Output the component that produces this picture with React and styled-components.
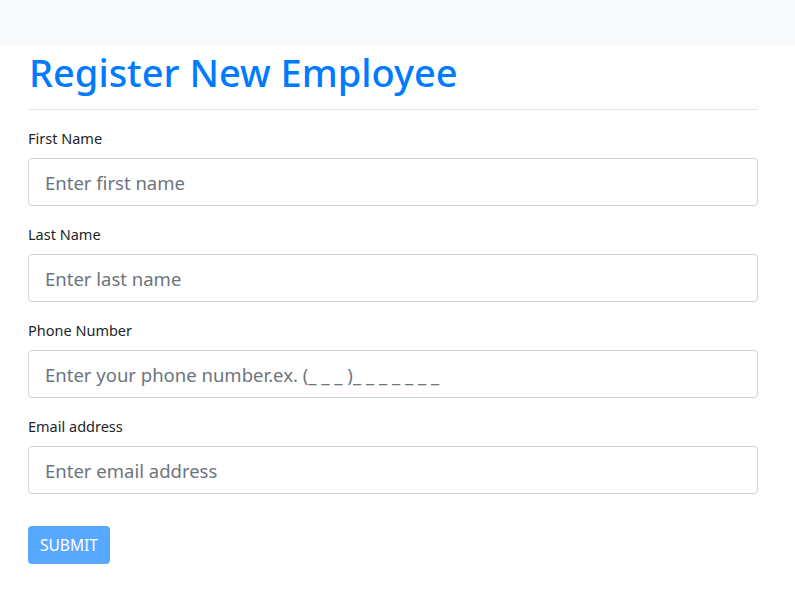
import React from 'react';
import styled, { createGlobalStyle } from 'styled-components';

const GlobalStyle = createGlobalStyle`
  body {
    margin: 0;
    background: #fff;
    font-family: "Noto Sans", "Open Sans", sans-serif;
    color: #212529;
  }
`;

const TopBar = styled.div`
  height: 45px;
  background: #f8f9fa;
`;

const Container = styled.div`
  padding: 0 37px 0 28px;
`;

const Title = styled.h1`
  margin: 3px 0 0 1px;
  font-size: 38px;
  line-height: 48px;
  font-weight: 500;
  color: #007bff;
`;

const LineSeparator = styled.hr`
  margin: 13px 0 20px;
  border: 0;
  border-top: 1px solid #e3e5e8;
`;

const FormGroup = styled.div`
  margin-bottom: 20px;
`;

const Label = styled.label`
  display: block;
  font-size: 14.5px;
  line-height: 16px;
  margin-bottom: 12px;
`;

const Input = styled.input`
  display: block;
  box-sizing: border-box;
  width: 100%;
  height: 48px;
  padding: 0 16px;
  font-family: inherit;
  font-size: 18.5px;
  color: #495057;
  border: 1px solid #ced4da;
  border-radius: 4px;
  outline: none;

  &::placeholder {
    color: #6c757d;
  }
`;

const Button = styled.button`
  margin-top: 12px;
  height: 38px;
  padding: 0 12px;
  font-family: inherit;
  font-size: 15.5px;
  color: #fff;
  background: #59a8ff;
  border: 0;
  border-radius: 4px;
`;

const fields = [
  { id: 'firstName', label: 'First Name', placeholder: 'Enter first name' },
  { id: 'lastName', label: 'Last Name', placeholder: 'Enter last name' },
  { id: 'phone', label: 'Phone Number', placeholder: 'Enter your phone number.ex. (_ _ _ )_ _ _ _ _ _ _' },
  { id: 'email', label: 'Email address', placeholder: 'Enter email address' },
];

export default function App() {
  return (
    <>
      <GlobalStyle />
      <TopBar />
      <Container>
        <Title>Register New Employee</Title>
        <LineSeparator />
        <form onSubmit={e => e.preventDefault()}>
          {fields.map(f => (
            <FormGroup key={f.id}>
              <Label htmlFor={f.id}>{f.label}</Label>
              <Input id={f.id} placeholder={f.placeholder} />
            </FormGroup>
          ))}
          <Button type="submit" disabled>SUBMIT</Button>
        </form>
      </Container>
    </>
  );
}
